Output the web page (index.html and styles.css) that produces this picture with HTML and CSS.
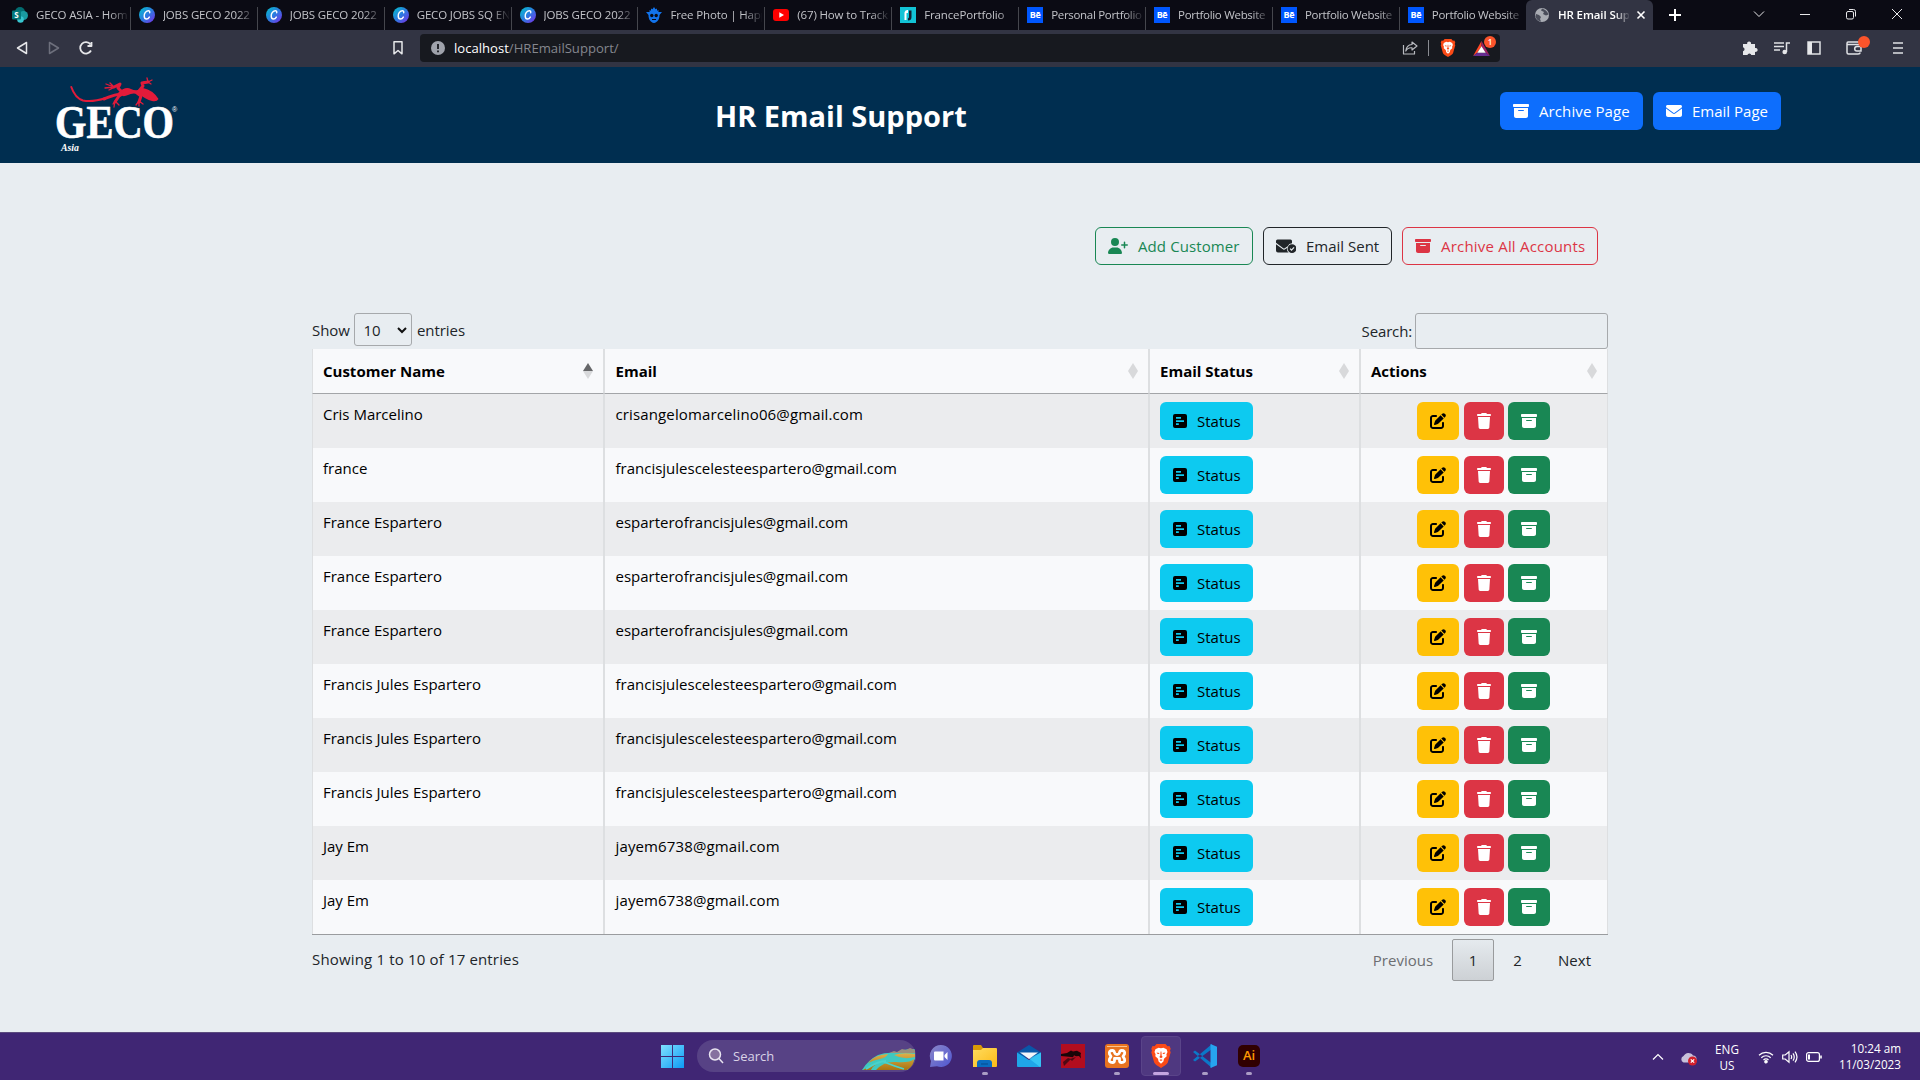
FILE: index.html
```html
<!DOCTYPE html>
<html lang="en">
<head>
<meta charset="utf-8">
<title>HR Email Support</title>
<link rel="stylesheet" href="styles.css">
</head>
<body>
<svg class="defs" width="0" height="0">
  <defs>
    <linearGradient id="gCanva" x1="0" y1="0" x2="1" y2="1"><stop offset="0" stop-color="#00c4cc"/><stop offset=".5" stop-color="#2c7be0"/><stop offset="1" stop-color="#7d2ae8"/></linearGradient>
    <linearGradient id="gWin" x1="0" y1="0" x2="1" y2="1"><stop offset="0" stop-color="#7fe0ff"/><stop offset="1" stop-color="#0d9bf5"/></linearGradient>
    <linearGradient id="gChat" x1="0" y1="0" x2="1" y2="1"><stop offset="0" stop-color="#8b86c8"/><stop offset="1" stop-color="#4f57d2"/></linearGradient>
    <linearGradient id="gFolder" x1="0" y1="0" x2="1" y2="1"><stop offset="0" stop-color="#ffdc5e"/><stop offset="1" stop-color="#fbb917"/></linearGradient>
    <linearGradient id="gSand" x1="0" y1="0" x2="0" y2="1"><stop offset="0" stop-color="#e0b04a"/><stop offset="1" stop-color="#a87412"/></linearGradient>
    <symbol id="archive" viewBox="0 0 512 512"><path d="M32 32H480c17.7 0 32 14.3 32 32V96c0 17.7-14.3 32-32 32H32C14.3 128 0 113.7 0 96V64C0 46.3 14.3 32 32 32zm0 128H480V416c0 35.3-28.7 64-64 64H96c-35.3 0-64-28.7-64-64V160zm128 80c0 8.8 7.2 16 16 16H336c8.8 0 16-7.2 16-16s-7.2-16-16-16H176c-8.8 0-16 7.2-16 16z"/></symbol>
    <symbol id="trash" viewBox="0 0 448 512"><path d="M135.2 17.7L128 32H32C14.3 32 0 46.3 0 64S14.3 96 32 96H416c17.7 0 32-14.3 32-32s-14.3-32-32-32H320l-7.2-14.3C307.4 6.8 296.3 0 284.2 0H163.8c-12.1 0-23.2 6.8-28.6 17.7zM416 128H32L53.2 467c1.6 25.3 22.6 45 47.9 45H346.9c25.3 0 46.3-19.7 47.9-45L416 128z"/></symbol>
    <symbol id="edit" viewBox="0 0 512 512"><path d="M471.6 21.7c-21.9-21.9-57.3-21.9-79.2 0L362.3 51.7l97.9 97.9 30.1-30.1c21.9-21.9 21.9-57.3 0-79.2L471.6 21.7zm-299.2 220c-6.1 6.1-10.8 13.6-13.5 21.9l-29.6 88.8c-2.9 8.6-.6 18.1 5.8 24.6s15.9 8.7 24.6 5.8l88.8-29.6c8.2-2.7 15.7-7.4 21.9-13.5L437.7 172.3 339.7 74.3 172.4 241.7zM96 64C43 64 0 107 0 160V416c0 53 43 96 96 96H352c53 0 96-43 96-96V320c0-17.7-14.3-32-32-32s-32 14.3-32 32v96c0 17.7-14.3 32-32 32H96c-17.7 0-32-14.3-32-32V160c0-17.7 14.3-32 32-32h96c17.7 0 32-14.3 32-32s-14.3-32-32-32H96z"/></symbol>
    <symbol id="envelope" viewBox="0 0 512 512"><path d="M48 64C21.500 64 0 85.500 0 112c0 15.100 7.100 29.300 19.200 38.400L236.800 313.600c11.400 8.500 27 8.500 38.400 0L492.800 150.400c12.100-9.100 19.200-23.300 19.200-38.400c0-26.500-21.500-48-48-48H48zM0 176V384c0 35.300 28.700 64 64 64H448c35.300 0 64-28.700 64-64V176L294.400 339.200c-22.800 17.100-54 17.100-76.800 0L0 176z"/></symbol>
    <symbol id="user-plus" viewBox="0 0 640 512"><path d="M96 128a128 128 0 1 1 256 0A128 128 0 1 1 96 128zM0 482.300C0 383.800 79.800 304 178.300 304h91.400C368.200 304 448 383.800 448 482.300c0 16.400-13.300 29.700-29.700 29.700H29.700C13.300 512 0 498.700 0 482.300zM504 312V248H440c-13.300 0-24-10.700-24-24s10.700-24 24-24h64V136c0-13.300 10.700-24 24-24s24 10.700 24 24v64h64c13.300 0 24 10.700 24 24s-10.700 24-24 24H552v64c0 13.300-10.700 24-24 24s-24-10.700-24-24z"/></symbol>
    <symbol id="mail-check" viewBox="0 0 20 16"><path d="M1.500 1.500h13a1.500 1.500 0 0 1 1.500 1.500v2.200a5 5 0 0 0-4.300 3L8.700 10.200a1.200 1.200 0 0 1-1.400 0L0 4.700V3a1.500 1.500 0 0 1 1.500-1.500z"/><path d="M0 6.200l6.600 4.900a2.300 2.300 0 0 0 2.800 0l1.700-1.200a5 5 0 0 0 1.500 4.600H2A2 2 0 0 1 0 12.500z"/><path fill-rule="evenodd" d="M16 6.200a4.400 4.400 0 1 1 0 8.800a4.400 4.400 0 0 1 0-8.800zm1.700 2.800l-2.200 2.300-1-1-.8.800 1.800 1.800 3-3.100z"/></symbol>
    <symbol id="poll" viewBox="0 0 14 14"><path fill-rule="evenodd" d="M2 0h10a2 2 0 0 1 2 2v10a2 2 0 0 1-2 2H2a2 2 0 0 1-2-2V2a2 2 0 0 1 2-2zM3 3.100v1.700h5V3.100zM3 6.200v1.700h8V6.200zM3 9.300V11h2.800V9.300z"/></symbol>
    <symbol id="canva" viewBox="0 0 16 16"><circle cx="8" cy="8" r="8" fill="url(#gCanva)"/><path d="M10.700 5.800c.4-1.200-.4-2.200-1.700-2-2.300.3-3.900 3-3.800 5.300.1 1.800 1 2.900 2.300 2.900 1.200 0 2.200-.8 2.800-1.900" fill="none" stroke="#fff" stroke-width="1.400" stroke-linecap="round"/></symbol>
    <symbol id="brave" viewBox="0 0 20 24"><path fill="#fb4a16" d="M5.500 0h9l2 2.200 2-.2 1.200 2.700-.7 2 .7 1.600-2.900 10.300c-.5 1.500-3.800 3.700-6.800 5.400-3-1.700-6.300-3.900-6.800-5.400L.3 8.300 1 6.700l-.7-2L1.500 2l2 .2z"/><path fill="#fff" d="M10 4.300l2.400-.6 3.200 1.600.9 2.700-1.100 2.200.3 2-2.700 2.500-.6 2.800L10 19.800l-2.400-2.300-.6-2.800-2.700-2.500.3-2L3.500 8l.9-2.700 3.200-1.600z"/><path fill="#fb4a16" d="M5.600 8.400l2.800.5-.4 1-1.700-.2zM14.400 8.400l-2.800.5.400 1 1.700-.2zM9.600 7.500h.8l.3 4.300 1 1.200L10 14.200 8.300 13l1-1.200zM8.400 16l1.600-.7 1.600.7-1.600 1z"/></symbol>
  </defs>
</svg>

<div class="tabs">
  <div class="tab"><svg viewBox="0 0 16 16"><circle cx="8" cy="5" r="5" fill="#036c70"/><circle cx="11.500" cy="8.500" r="4.500" fill="#1a9ba1"/><circle cx="8.500" cy="12.500" r="3.300" fill="#37c6d0"/><rect y="3.500" width="9" height="9" rx="1" fill="#03787c"/><text x="4.500" y="11" text-anchor="middle" class="glyph8">S</text></svg><span>GECO ASIA - Home</span></div>
  <div class="tab"><svg><use href="#canva"/></svg><span>JOBS GECO 2022</span></div>
  <div class="tab"><svg><use href="#canva"/></svg><span>JOBS GECO 2022</span></div>
  <div class="tab"><svg><use href="#canva"/></svg><span>GECO JOBS SQ EN</span></div>
  <div class="tab"><svg><use href="#canva"/></svg><span>JOBS GECO 2022</span></div>
  <div class="tab"><svg viewBox="0 0 16 16"><path fill="#1273eb" d="M8 0l1.500 2.200L11 1.500v2h2l-.8 1.500H16l-2.500 3c.2 4-2 7.500-5.500 8-3.500-.5-5.700-4-5.500-8L0 5h3.800L3 3.500h2v-2l1.500.7z"/><circle cx="5.800" cy="8.500" r="1.700" fill="#0b0b14"/><circle cx="10.200" cy="8.500" r="1.700" fill="#0b0b14"/><path d="M6 12.500h4" stroke="#0b0b14"/></svg><span>Free Photo | Happy</span></div>
  <div class="tab"><svg viewBox="0 0 16 16"><rect y="2" width="16" height="12" rx="3" fill="#f00"/><path d="M6.300 5.300v5.400L11 8z" fill="#fff"/></svg><span>(67) How to Track</span></div>
  <div class="tab"><svg viewBox="0 0 16 16"><rect width="16" height="16" fill="#12c4d6"/><path d="M4.500 13V5.500A3 3 0 0 1 8 3v3H6.500v7z" fill="#fff"/><path d="M9 3.500h2.500V10q0 3.500-3.500 3.500v-2.200q1 0 1-1.300z" fill="#123"/></svg><span>FrancePortfolio</span></div>
  <div class="tab"><i class="be">Bē</i><span>Personal Portfolio</span></div>
  <div class="tab"><i class="be">Bē</i><span>Portfolio Website</span></div>
  <div class="tab"><i class="be">Bē</i><span>Portfolio Website</span></div>
  <div class="tab last"><i class="be">Bē</i><span>Portfolio Website</span></div>
  <div class="tab active"><svg viewBox="0 0 16 16"><circle cx="8" cy="8" r="7" fill="#a9acb3"/><path d="M2 7l3 1 2 2-1 2 1 2.500Q3 14 1.500 9.500zM8 1.500l-1 2 3 1.500-1 2 3 1.500 2.500-1Q13 3 8 1.500z" fill="#4a4d5a"/></svg><span>HR Email Supp</span><svg class="close" viewBox="0 0 10 10"><path d="M1.500 1.500l7 7M8.500 1.500l-7 7"/></svg></div>
  <svg class="plus" viewBox="0 0 12 12"><path d="M6 0v12M0 6h12"/></svg>
  <div class="winctl">
    <svg viewBox="0 0 12 12"><path d="M1 3.500l5 5 5-5"/></svg>
    <svg viewBox="0 0 12 12"><path d="M1 6.500h10"/></svg>
    <svg viewBox="0 0 12 12"><rect x="1.500" y="3.500" width="7" height="7.500" rx="1.500"/><path d="M4 1.500h4.500q2 0 2 2V8.500"/></svg>
    <svg viewBox="0 0 12 12"><path d="M1 1l10 10M11 1L1 11"/></svg>
  </div>
</div>

<div class="toolbar">
  <div class="nav">
    <svg viewBox="0 0 16 16"><path d="M12.500 2.500v11L3.500 8z"/></svg>
    <svg class="dim" viewBox="0 0 16 16"><path d="M3.500 2.500v11l9-5.500z"/></svg>
    <svg viewBox="0 0 16 16"><path d="M13 10.500A5.700 5.700 0 1 1 12.500 4.500M13.500 2v4h-4" stroke-width="1.800"/></svg>
  </div>
  <svg class="bookmark" viewBox="0 0 16 16"><path d="M4 1.800h8v12L8 10.500l-4 3.300z"/></svg>
  <div class="url">
    <svg class="info" viewBox="0 0 14 14"><circle cx="7" cy="7" r="7" fill="#9fa2ab"/><path d="M7 3v5M7 9.500v1.700" stroke="#17191f" stroke-width="1.800"/></svg>
    <span class="addr"><b>localhost</b>/HREmailSupport/</span>
    <svg class="share" viewBox="0 0 16 16"><path d="M1.500 5v9h11v-3M10 2l5 4-5 4V7.800C7 7.500 5 8.500 3.800 11 4.200 7 6.500 4.700 10 4.500z"/></svg>
    <i class="sep"></i>
    <svg class="lion"><use href="#brave"/></svg>
    <div class="bat"><svg viewBox="0 0 18 16"><path d="M9 0v5.500L4.500 12.500 0 16z" fill="#ff4724"/><path d="M9 0l9 16-4.500-3.500L9 5.500z" fill="#9e1f63"/><path d="M0 16l4.500-3.500h9L18 16z" fill="#662d91"/><path d="M9 5.500l4.500 7h-9z" fill="#fff"/></svg><b>1</b></div>
  </div>
  <div class="tools">
    <svg viewBox="0 0 16 16"><path class="solid" d="M1 4h4.200a2 2 0 1 1 3.800 0H13v4a2 2 0 1 1 0 3.800V15H9.300a2 2 0 0 0-3.900 0H1v-3.800a2 2 0 0 0 0-3.900z"/></svg>
    <svg viewBox="0 0 16 16"><path d="M0 3h10M0 6.500h10M0 10h6M12.500 12V3H16"/><circle class="solid" cx="10.700" cy="12" r="2.300"/></svg>
    <svg viewBox="0 0 16 16"><path d="M2 2h12v12H2z"/><path class="solid" d="M2 2h4v12H2z"/></svg>
    <div class="wallet"><svg viewBox="0 0 16 16"><path d="M14 5V3.500Q14 2 12 2H2Q1 2 1 3.500v9Q1 14 2.500 14H12q2 0 2-1.500M1 4.500h12M15 6.500h-4a2.300 2.300 0 0 0 0 4.600h4z"/></svg><b></b></div>
    <svg class="menu" viewBox="0 0 16 16"><path d="M3 3h10M3 8h10M3 13h10"/></svg>
  </div>
</div>

<header class="header">
  <svg class="logo" viewBox="24 15 126 78">
    <g fill="none" stroke="#e31b3a" stroke-linecap="round" stroke-linejoin="round">
      <path stroke-width="3" d="M91 34C82 35 80 37 74 39"/>
      <path stroke-width="2" d="M41.300 27Q45 38 53 40.500 62 42.500 76 38"/>
      <path stroke-width="3" d="M93 33l-5-5 2-4-6 3M94 33l-5 3-4 6M109 31l4-5-1-3 6-1M107 33l4 3-2 6"/>
      <path stroke-width="1.300" d="M84 27l-8-3M84 27l-9 1M84 27l-4-4M83 28l-4 2M85 41l-1 6M85 41l4 4M85 41l-2 3M118 22l-1-4M118 22l4-2M118 22l3 2M118 22h-4M109 41l-3 4M109 41l0 5M109 41l4 3"/>
    </g>
    <path fill="#e31b3a" d="M88 33Q95 26 101 29T113 28Q123 30 128.500 39 127 42 122 41 115 39 111 35 103 32 98 35 92 38 88 33z"/>
    <text class="logo-name" x="25" y="77.500" textLength="119" lengthAdjust="spacingAndGlyphs">GECO</text>
    <text class="logo-sub" x="31" y="90.500" textLength="18" lengthAdjust="spacingAndGlyphs">Asia</text>
    <text class="logo-reg" x="142" y="51.500">®</text>
  </svg>
  <h1>HR Email Support</h1>
  <div class="header-actions">
    <button class="btn primary archive-page"><svg><use href="#archive"/></svg>Archive Page</button>
    <button class="btn primary email-page"><svg><use href="#envelope"/></svg>Email Page</button>
  </div>
</header>

<main class="content">
  <div class="actions">
    <button class="btn out-green"><svg class="wide"><use href="#user-plus"/></svg>Add Customer</button>
    <button class="btn out-dark"><svg class="wide"><use href="#mail-check"/></svg>Email Sent</button>
    <button class="btn out-red"><svg><use href="#archive"/></svg>Archive All Accounts</button>
  </div>
  <div class="filters">
    <div class="length">Show <span class="select">10<svg viewBox="0 0 10 8"><path d="M1 2l4 4 4-4"/></svg></span> entries</div>
    <label class="search">Search:<input type="text"></label>
  </div>
  <table class="grid">
    <colgroup><col class="c1"><col class="c2"><col class="c3"><col class="c4"></colgroup>
    <thead><tr>
      <th><div>Customer Name<i class="sort asc"></i></div></th><th><div>Email<i class="sort"></i></div></th><th><div>Email Status<i class="sort"></i></div></th><th><div>Actions<i class="sort"></i></div></th>
    </tr></thead>
    <tbody>
      <tr><td>Cris Marcelino</td><td class="num-mail">crisangelomarcelino06@gmail.com</td><td><button class="btn info"><svg><use href="#poll"/></svg>Status</button></td><td><div class="ops"><button class="op edit"><svg><use href="#edit"/></svg></button><button class="op trash"><svg><use href="#trash"/></svg></button><button class="op store"><svg><use href="#archive"/></svg></button></div></td></tr>
      <tr><td>france</td><td>francisjulescelesteespartero@gmail.com</td><td><button class="btn info"><svg><use href="#poll"/></svg>Status</button></td><td><div class="ops"><button class="op edit"><svg><use href="#edit"/></svg></button><button class="op trash"><svg><use href="#trash"/></svg></button><button class="op store"><svg><use href="#archive"/></svg></button></div></td></tr>
      <tr><td>France Espartero</td><td>esparterofrancisjules@gmail.com</td><td><button class="btn info"><svg><use href="#poll"/></svg>Status</button></td><td><div class="ops"><button class="op edit"><svg><use href="#edit"/></svg></button><button class="op trash"><svg><use href="#trash"/></svg></button><button class="op store"><svg><use href="#archive"/></svg></button></div></td></tr>
      <tr><td>France Espartero</td><td>esparterofrancisjules@gmail.com</td><td><button class="btn info"><svg><use href="#poll"/></svg>Status</button></td><td><div class="ops"><button class="op edit"><svg><use href="#edit"/></svg></button><button class="op trash"><svg><use href="#trash"/></svg></button><button class="op store"><svg><use href="#archive"/></svg></button></div></td></tr>
      <tr><td>France Espartero</td><td>esparterofrancisjules@gmail.com</td><td><button class="btn info"><svg><use href="#poll"/></svg>Status</button></td><td><div class="ops"><button class="op edit"><svg><use href="#edit"/></svg></button><button class="op trash"><svg><use href="#trash"/></svg></button><button class="op store"><svg><use href="#archive"/></svg></button></div></td></tr>
      <tr><td>Francis Jules Espartero</td><td>francisjulescelesteespartero@gmail.com</td><td><button class="btn info"><svg><use href="#poll"/></svg>Status</button></td><td><div class="ops"><button class="op edit"><svg><use href="#edit"/></svg></button><button class="op trash"><svg><use href="#trash"/></svg></button><button class="op store"><svg><use href="#archive"/></svg></button></div></td></tr>
      <tr><td>Francis Jules Espartero</td><td>francisjulescelesteespartero@gmail.com</td><td><button class="btn info"><svg><use href="#poll"/></svg>Status</button></td><td><div class="ops"><button class="op edit"><svg><use href="#edit"/></svg></button><button class="op trash"><svg><use href="#trash"/></svg></button><button class="op store"><svg><use href="#archive"/></svg></button></div></td></tr>
      <tr><td>Francis Jules Espartero</td><td>francisjulescelesteespartero@gmail.com</td><td><button class="btn info"><svg><use href="#poll"/></svg>Status</button></td><td><div class="ops"><button class="op edit"><svg><use href="#edit"/></svg></button><button class="op trash"><svg><use href="#trash"/></svg></button><button class="op store"><svg><use href="#archive"/></svg></button></div></td></tr>
      <tr><td>Jay Em</td><td class="num-mail">jayem6738@gmail.com</td><td><button class="btn info"><svg><use href="#poll"/></svg>Status</button></td><td><div class="ops"><button class="op edit"><svg><use href="#edit"/></svg></button><button class="op trash"><svg><use href="#trash"/></svg></button><button class="op store"><svg><use href="#archive"/></svg></button></div></td></tr>
      <tr><td>Jay Em</td><td class="num-mail">jayem6738@gmail.com</td><td><button class="btn info"><svg><use href="#poll"/></svg>Status</button></td><td><div class="ops"><button class="op edit"><svg><use href="#edit"/></svg></button><button class="op trash"><svg><use href="#trash"/></svg></button><button class="op store"><svg><use href="#archive"/></svg></button></div></td></tr>
    </tbody>
  </table>
  <div class="table-foot">
    <div class="summary">Showing 1 to 10 of 17 entries</div>
    <div class="pages"><a class="off">Previous</a><a class="current">1</a><a class="num">2</a><a>Next</a></div>
  </div>
</main>

<footer class="taskbar">
  <svg class="start" viewBox="0 0 24 24"><path fill="url(#gWin)" d="M0 0h11.500v11.500H0zM12.500 0H24v11.500H12.500zM0 12.500h11.500V24H0zM12.500 12.500H24V24H12.500z"/></svg>
  <div class="find">
    <svg class="lens" viewBox="0 0 16 16"><circle cx="7" cy="6.500" r="5.500" fill="#86719f"/><path d="M11 10.500l4 4.500"/></svg><span>Search</span>
    <svg class="scene" viewBox="0 0 54 24">
      <path fill="#3fc9c0" d="M0 22Q6 12 16 7q8-3 18-2 5-4 19-4l0 10-7 11z"/>
      <path fill="#9a8f7c" d="M27 5l5-2 3 1 5-3 4 1 4-2 5 2v3H30z"/>
      <path fill="url(#gSand)" d="M6 15q6-8 20-9-2 4-8 5t-12 4zM32 7q8-3 21-1v3q-12 3-21-2zM14 22q8-9 20-8 14 1 18-3 0 7-7 11zM1 22q6-4 14-6-4 2-6 6z"/>
      <path d="M22 14q10 4 20 7M4 21q12-8 20-8" stroke="#4ad2cb" stroke-width="1.800" fill="none"/>
    </svg>
  </div>
  <div class="apps">
    <div class="app"><svg viewBox="0 0 24 24"><path fill="url(#gChat)" d="M12 1a11 11 0 1 1-4 21.300L1 23l1-6A11 11 0 0 1 12 1z"/><path fill="#fff" d="M6 7.500h8.500v9H6q-1 0-1-1v-7q0-1 1-1zM15.500 11l3-3v8l-3-3z"/></svg></div>
    <div class="app run"><svg viewBox="0 0 24 24"><path fill="#d99a06" d="M0 2q0-1 1-1h7l2 3v3H0z"/><path fill="url(#gFolder)" d="M0 6h8l2-2h13q1 0 1 1v17q0 1-1 1H0z"/><path fill="#0a6cc0" d="M4 23v-4q0-3 3-3h9q3 0 3 3v4z"/><path d="M8 20h7" stroke="#064b8d"/></svg></div>
    <div class="app"><svg viewBox="0 0 24 24"><path fill="#0a57a8" d="M0 8.500L12 1l12 7.500v5H0z"/><path fill="#1fa6e8" d="M0 8.500l12 7.500 12-7.500V22q0 1-1 1H1q-1 0-1-1z"/><path fill="#3fd0fa" d="M24 8.500V22q0 1-1 1L12 14.500z" opacity=".7"/><path fill="#f4f6fa" d="M3 8.500h18l-9 6.500z"/></svg></div>
    <div class="app"><svg viewBox="0 0 24 24"><path fill="#b30d1e" d="M0 0h24v24H0z"/><path fill="#180608" d="M0 10l6-1 4-2.500 2 1 4-.8 4 2.300-.5 2 .5 3.500-2-2.500-3 .3-2-1-1 2-4-.5-8-.8z"/><path fill="#4d0a14" d="M2 18l5-4 3 1-3 3-4 4zM9 15l6-2-4 4z"/></svg></div>
    <div class="app run"><svg viewBox="0 0 24 24"><rect width="24" height="24" rx="3" fill="#e8731f"/><path d="M2 2.500h20" stroke="#fac38f"/><path d="M7.500 6.500q-4 0-3 3.500l1.500 2.500-1.500 2.500q-1 3.500 3 3.500 2 0 2-2v-2.200h5v2.200q0 2 2 2 4 0 3-3.500l-1.500-2.500 1.500-2.500q1-3.500-3-3.500-1.500 0-2 2-.5 2-2.500 2t-2.500-2q-.5-2-2-2z" fill="none" stroke="#fff" stroke-width="2.800" stroke-linejoin="round"/></svg></div>
    <div class="app front"><svg viewBox="0 0 20 24"><use href="#brave"/></svg></div>
    <div class="app run"><svg viewBox="0 0 24 24"><path d="M0 8l2-1.500L19 19.500V24zM0 16l2 1.500L19 5V0z" fill="#0b78c8"/><path d="M17.500 0L24 2.800v18.400L17.500 24z" fill="#27a4ef"/></svg></div>
    <div class="app run"><b class="ai">Ai</b></div>
  </div>
  <div class="tray">
    <svg class="chev" viewBox="0 0 12 8"><path d="M1 6.500L6 1.500l5 5"/></svg>
    <svg class="cloud" viewBox="0 0 18 14"><path class="fillc" d="M3.500 10.500a3.500 3.500 0 0 1 0-6.500A5.500 5.500 0 0 1 13 3.500a3.500 3.500 0 0 1 0 7z"/><circle cx="12.500" cy="9" r="4.500" fill="#d3202c" stroke="none"/><path d="M10.800 7.300l3.400 3.400M14.200 7.300l-3.400 3.400"/></svg>
    <div class="lang">ENG<br>US</div>
    <svg class="wifi" viewBox="0 0 16 14"><path d="M1 5.200a10 10 0 0 1 14 0M3.300 7.700a6.700 6.700 0 0 1 9.400 0M5.500 10a3.500 3.500 0 0 1 5 0"/><circle cx="8" cy="11.800" r="1.200" fill="#fff"/></svg>
    <svg class="vol" viewBox="0 0 16 14"><path d="M.7 5v4h2.500L7 12.300V1.700L3.200 5zM9 5q1.300 2 0 4M11 3.300q2.500 3.700 0 7.400M13 1.700q4 5.300 0 10.600"/></svg>
    <svg class="batt" viewBox="0 0 16 12"><rect x=".6" y="1.600" width="12.800" height="8.800" rx="2"/><path d="M15 4.500v3" stroke-width="1.600"/><path d="M3 3.500v5" stroke-width="2"/></svg>
    <div class="clock">10:24 am<br>11/03/2023</div>
  </div>
</footer>
</body>
</html>
```
FILE: styles.css
```css
* { box-sizing: border-box; }
body { margin: 0; width: 1920px; height: 1080px; overflow: hidden; background: #e8edf1; display: flex; flex-direction: column; font: 15px/24px "Open Sans", "Noto Sans", sans-serif; color: #212529; }
svg { display: block; flex: none; }
.defs { position: absolute; }
i { font-style: normal; }

/* browser tabs */
.tabs { height: 30px; background: #0b0b14; display: flex; padding-left: 4px; flex: none; }
.tab { width: 126.900px; flex: none; display: flex; align-items: center; padding-left: 8px; color: #c2c3c8; font-size: 11.500px; letter-spacing: -0.150px; background: linear-gradient(#45464d, #45464d) right bottom / 1px 23px no-repeat; }
.tab > svg, .be { width: 16px; height: 16px; margin-right: 8px; flex: none; }
.tab span { flex: 1; overflow: hidden; white-space: nowrap; margin-right: 3px; mask-image: linear-gradient(90deg, #000 80%, transparent 102%); }
.glyph8 { font: bold 8px "Open Sans", sans-serif; fill: #fff; }
.be { background: #0057ff; color: #fff; font: bold 9px/16px "Open Sans", sans-serif; text-align: center; }
.tab:has(.be) { letter-spacing: -0.300px; }
.tab.last { width: 126.100px; background: none; }
.tab.active { background: #323443; border-radius: 6px 6px 0 0; color: #fff; font-weight: 600; letter-spacing: -0.100px; }
.tab.active span { margin-right: 7px; }
.tab .close { width: 10px; height: 10px; margin-right: 7px; fill: none; stroke: #fff; stroke-width: 1.600; }
.plus { width: 12px; height: 12px; margin: 9px 0 0 16px; stroke: #fff; stroke-width: 2; }
.winctl { margin-left: auto; display: flex; gap: 34px; padding: 8px 17px 0 0; }
.winctl svg { width: 12px; height: 12px; fill: none; stroke: #e8e8ea; stroke-width: 1; }

/* address bar */
.toolbar { height: 37px; background: #323443; display: flex; align-items: center; flex: none; padding: 0 15px 0 14px; }
.nav { display: flex; gap: 16px; width: 376px; }
.nav svg, .bookmark, .share { width: 16px; height: 16px; margin-bottom: 1px; fill: none; stroke: #e6e7ea; stroke-width: 1.500; stroke-linejoin: round; }
.nav svg.dim { stroke: #6d6f7c; }
.bookmark { margin-right: 14px; }
.url { width: 1080px; height: 28px; margin-bottom: 1px; border-radius: 4px; background: #17191f; display: flex; align-items: center; padding: 0 10px 0 11px; }
.info { width: 14px; height: 14px; }
.addr { margin-left: 9px; flex: 1; color: #85878e; font-size: 13.100px; }
.addr b { color: #fff; font-weight: 400; }
.share { stroke: #b9bbc0; stroke-width: 1.200; }
.sep { width: 1px; height: 16px; background: #8a8c92; margin: 0 11px 0 10px; }
.lion { width: 16px; height: 18px; }
.bat { position: relative; margin-left: 17px; padding-top: 1px; }
.bat svg { width: 17px; height: 15px; }
.bat b { position: absolute; left: 11px; top: -4px; width: 12px; height: 12px; border-radius: 6px; background: #fb542b; color: #fff; font: 600 8px/12px "Open Sans", sans-serif; text-align: center; }
.tools { display: flex; align-items: center; margin: 0 0 1px auto; }
.tools svg { width: 16px; height: 16px; fill: none; stroke: #e0e1e5; stroke-width: 1.500; }
.tools > svg + svg { margin-left: 16px; }
.tools .solid { fill: #e6e7ea; stroke: none; }
.wallet { position: relative; margin-left: 24px; }
.wallet b { position: absolute; left: 12px; top: -4px; width: 12px; height: 12px; border-radius: 6px; background: #fb542b; }
.tools .menu { margin: 0 -1px 0 28px; }

/* page header */
.header { height: 96px; background: #002e50; display: flex; flex: none; padding: 8px 139px 0 54px; }
.logo { width: 126px; height: 78px; }
.logo-name { font: bold 47px "Liberation Serif", serif; fill: #fff; stroke: #fff; stroke-width: .7px; }
.logo-sub { font: italic bold 10px "Liberation Serif", serif; fill: #fff; }
.logo-reg { font: 7px "Liberation Sans", sans-serif; fill: #fff; }
.header h1 { margin: 22px 0 0 535px; font-size: 29px; line-height: 38px; font-weight: 700; color: #fff; white-space: nowrap; }
.header-actions { display: flex; gap: 10px; margin: 17px 0 0 auto; }
.btn { height: 38px; display: flex; align-items: center; border: 1px solid transparent; border-radius: 6px; padding: 0 12px; font: 15px/24px "Open Sans", "Noto Sans", sans-serif; white-space: nowrap; background: none; color: inherit; }
.btn svg { width: 16px; height: 16px; margin-right: 10px; fill: currentColor; }
.btn svg.wide { width: 20px; }
.primary { background: #0d6efd; color: #fff; }
.archive-page { width: 143px; letter-spacing: .1px; }
.email-page { width: 128px; }
.out-green { width: 158px; border-color: #198754; color: #198754; letter-spacing: .1px; }
.out-dark { width: 129px; border-color: #212529; color: #212529; }
.out-red { width: 196px; border-color: #dc3545; color: #dc3545; letter-spacing: .2px; }

/* customer table */
.content { flex: 1; padding: 64px 312px 0; }
.actions { display: flex; justify-content: flex-end; gap: 10px; padding-right: 10px; }
.filters { display: flex; justify-content: space-between; height: 36px; margin-top: 48px; }
.length { display: flex; align-items: center; height: 34px; gap: 4.500px; letter-spacing: -0.050px; }
.select { width: 58px; height: 33px; margin-bottom: 1px; border: 1px solid #a6a9ac; border-radius: 3px; display: flex; align-items: center; justify-content: space-between; padding: 0 4px 0 8px; }
.select svg { width: 10px; height: 8px; fill: none; stroke: #111; stroke-width: 2; }
.search { display: flex; align-items: center; gap: 3px; letter-spacing: -0.150px; }
.search input { width: 193px; height: 36px; border: 1px solid #a6a9ac; border-radius: 3px; background: transparent; }
.grid { width: 1296px; table-layout: fixed; border-collapse: separate; border-spacing: 0; color: #000; border-bottom: 1px solid #9a9c9f; }
.c1 { width: 292px; }
.c2 { width: 545px; }
.c3 { width: 211px; }
.c4 { width: 248px; }
.grid th { height: 45px; padding: 0 10px; background: #f8f9fb; border: 0 solid #dddfe1; border-width: 0 1px; border-bottom: 1px solid #a3a5a8; text-align: left; font-weight: 700; }
.grid th div { display: flex; justify-content: space-between; align-items: center; }
.grid td { height: 54px; padding: 8px 10px; vertical-align: top; border: 0 solid #dddfe1; border-width: 0 1px; background: #f8f9fb; }
.grid td:nth-child(2), .grid th:nth-child(2) { padding-left: 10.500px; }
.grid .num-mail { letter-spacing: .13px; }
.grid tbody tr:nth-child(odd) td { background: #ebecee; }
.sort { width: 10px; display: flex; flex-direction: column; }
.sort::before, .sort::after { content: ""; border: 5px solid transparent; }
.sort::before { border-top: 0; border-bottom: 8px solid #d8d9db; }
.sort::after { border-bottom: 0; border-top: 8px solid #d8d9db; }
.sort.asc::before { border-bottom-color: #666769; }
.info.btn { width: 93px; height: 38px; background: #0dcaf0; color: #000; }
.info.btn svg { width: 14px; height: 14px; }
.ops { display: flex; justify-content: center; padding-right: 2px; }
.op { width: 42px; height: 38px; border: 0; border-radius: 6px; display: flex; align-items: center; justify-content: center; padding: 0; }
.op svg { width: 16px; height: 16px; }
.edit { background: #ffc107; margin-right: 5px; }
.op.trash { width: 40px; background: #dc3545; fill: #fff; margin-right: 4px; }
.op.trash svg { width: 14px; }
.store { background: #198754; fill: #fff; }
.table-foot { display: flex; justify-content: space-between; padding-top: 4px; }
.summary { padding-top: 8px; letter-spacing: .16px; }
.pages { display: flex; }
.pages a { height: 42px; line-height: 42px; padding: 0 17px; }
.pages .off { color: #6c6e71; padding-right: 19px; }
.pages .current { width: 42px; border: 1px solid #999b9d; border-radius: 2px; line-height: 41px; background: linear-gradient(#e5eaee, #cdd1d5); text-align: center; padding: 0; }
.pages .num { width: 47px; padding: 0; text-align: center; }

/* desktop taskbar */
.taskbar { height: 48px; background: #402674; border-top: 1px solid #5b4a7e; flex: none; display: flex; padding-left: 661px; color: #fff; }
.start { width: 23px; height: 23px; margin: 12px 13px 0 0; }
.find { width: 219px; height: 32px; margin-top: 7px; border-radius: 16px; background: #574285; display: flex; align-items: center; padding-left: 11px; font-size: 13px; color: #d9d3e6; overflow: hidden; }
.lens { width: 16px; height: 16px; fill: none; stroke: #e8e4f0; stroke-width: 1.500; margin-right: 9px; }
.scene { width: 54px; height: 24px; margin: 7px 0 0 auto; }
.apps { display: flex; margin-left: 5px; gap: 4px; padding-top: 3px; }
.app { width: 40px; height: 40px; border-radius: 4px; display: flex; flex-direction: column; align-items: center; padding-top: 8px; }
.app svg, .ai { width: 24px; height: 24px; }
.ai { background: #300000; color: #ff9a00; border-radius: 5px; width: 22px; height: 22px; margin: 1px 0; font: 600 13px/21px "Open Sans", sans-serif; text-align: center; }
.run::after, .front::after { content: ""; width: 6px; height: 3px; border-radius: 2px; background: #ab9cc5; margin-top: 4px; }
.front { background: #4f3880; border: 1px solid #5a4489; padding-top: 7px; }
.front::after { width: 16px; background: #c4a5e0; }
.tray { margin-left: auto; display: flex; align-items: center; padding-right: 19px; font-size: 11.700px; line-height: 16px; }
.tray svg { fill: none; stroke: #fff; stroke-width: 1.200; }
.chev { width: 12px; height: 8px; }
.tray .cloud { width: 18px; height: 14px; margin: 4px 16px 0 16px; }
.tray .cloud .fillc { fill: #c9c1da; stroke: none; }
.lang { text-align: center; width: 26px; margin-right: 18px; }
.wifi, .vol { width: 16px; height: 14px; margin-right: 8px; }
.batt { width: 16px; height: 12px; margin-right: 15px; }
.clock { text-align: right; width: 64px; white-space: nowrap; padding-bottom: 2px; }
```
